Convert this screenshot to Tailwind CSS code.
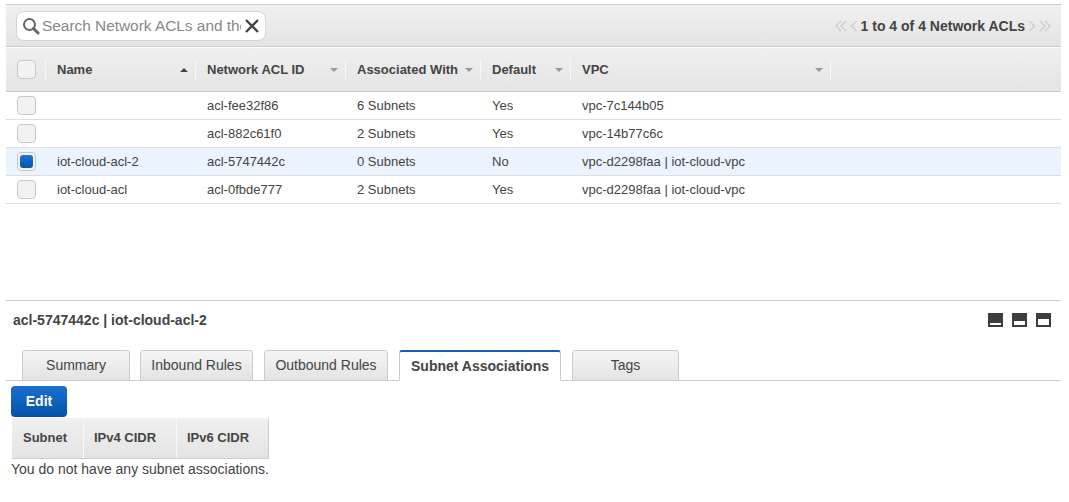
<!DOCTYPE html>
<html lang="en">
<head>
    <meta charset="UTF-8">
    <title>Network ACLs</title>
    <script src="https://cdn.jsdelivr.net/npm/@tailwindcss/browser@4"></script>
</head>
<body class="bg-white font-['Liberation_Sans',Arial,sans-serif] text-[#444] h-[502px] overflow-hidden">
    <div class="pt-1 pl-[6px] pr-2">
        <!-- Toolbar -->
        <div class="h-[43px] pt-px border-t border-b border-[#ccc] bg-linear-to-b from-[#f0f0f0] to-[#e4e4e4] flex items-center justify-between pl-[10px] pr-[10px]">
            <div class="w-[250px] h-[30px] bg-white border border-[#d5d5d5] rounded-lg flex items-center pl-[5px]">
                <svg width="18" height="18" viewBox="0 0 18 18" fill="none" class="shrink-0">
                    <circle cx="7.5" cy="7.5" r="5.5" stroke="#666" stroke-width="2"/>
                    <path d="M11.5 11.5 L16 16" stroke="#666" stroke-width="3" stroke-linecap="round"/>
                </svg>
                <div class="w-[199px] overflow-hidden whitespace-nowrap text-[15.4px] text-[#888] ml-[2px]">Search Network ACLs and their properties</div>
                <svg width="16" height="16" viewBox="0 0 16 16" fill="none" class="shrink-0 ml-[3px]">
                    <path d="M2 2 L14 14 M14 2 L2 14" stroke="#444" stroke-width="2.4"/>
                </svg>
            </div>
            <div class="flex items-center gap-[3px]">
                <svg width="12" height="12" viewBox="0 0 12 12" fill="none" stroke="#ccc" stroke-width="1.3"><path d="M6 1 L1 6 L6 11 M11 1 L6 6 L11 11"/></svg>
                <svg width="8" height="12" viewBox="0 0 8 12" fill="none" stroke="#ccc" stroke-width="1.3"><path d="M6.5 1 L1.5 6 L6.5 11"/></svg>
                <span class="text-[14px] font-bold">1 to 4 of 4 Network ACLs</span>
                <svg width="8" height="12" viewBox="0 0 8 12" fill="none" stroke="#ccc" stroke-width="1.3"><path d="M1.5 1 L6.5 6 L1.5 11"/></svg>
                <svg width="12" height="12" viewBox="0 0 12 12" fill="none" stroke="#ccc" stroke-width="1.3"><path d="M1 1 L6 6 L1 11 M6 1 L11 6 L6 11"/></svg>
            </div>
        </div>

        <!-- Table header -->
        <div class="h-[44px] mt-px border-b border-[#ccc] bg-linear-to-b from-[#f0f0f0] to-[#e4e4e4] flex items-center text-[13px] font-bold">
            <div class="w-[40px] h-[20px] pl-[11px] flex items-center border-r border-[#f8f8f8] shrink-0">
                <span class="w-[19px] h-[19px] bg-[#f2f2f2] border border-[#c8c8c8] rounded-[4px]"></span>
            </div>
            <div class="w-[150px] h-[20px] pl-[11px] pr-[7px] flex items-center justify-between border-r border-[#f8f8f8] shrink-0">Name<span class="w-0 h-0 border-x-[4px] border-x-transparent border-b-[4px] border-b-[#444]"></span></div>
            <div class="w-[150px] h-[20px] pl-[11px] pr-[7px] flex items-center justify-between border-r border-[#f8f8f8] shrink-0">Network ACL ID<span class="w-0 h-0 border-x-[4px] border-x-transparent border-t-[4px] border-t-[#999]"></span></div>
            <div class="w-[135px] h-[20px] pl-[11px] pr-[7px] flex items-center justify-between border-r border-[#f8f8f8] shrink-0">Associated With<span class="w-0 h-0 border-x-[4px] border-x-transparent border-t-[4px] border-t-[#999]"></span></div>
            <div class="w-[90px] h-[20px] pl-[11px] pr-[7px] flex items-center justify-between border-r border-[#f8f8f8] shrink-0">Default<span class="w-0 h-0 border-x-[4px] border-x-transparent border-t-[4px] border-t-[#999]"></span></div>
            <div class="w-[260px] h-[20px] pl-[11px] pr-[7px] flex items-center justify-between border-r border-[#f8f8f8] shrink-0">VPC<span class="w-0 h-0 border-x-[4px] border-x-transparent border-t-[4px] border-t-[#999]"></span></div>
        </div>

        <!-- Rows -->
        <div class="text-[13px]">
            <div class="h-[28px] border-b border-[#ddd] flex items-center">
                <div class="w-[40px] pl-[11px] flex shrink-0"><span class="w-[19px] h-[19px] bg-[#f2f2f2] border border-[#c8c8c8] rounded-[4px]"></span></div>
                <div class="w-[150px] pl-[11px] shrink-0"></div>
                <div class="w-[150px] pl-[11px] shrink-0">acl-fee32f86</div>
                <div class="w-[135px] pl-[11px] shrink-0">6 Subnets</div>
                <div class="w-[90px] pl-[11px] shrink-0">Yes</div>
                <div class="pl-[11px]">vpc-7c144b05</div>
            </div>
            <div class="h-[28px] border-b border-[#ddd] flex items-center">
                <div class="w-[40px] pl-[11px] flex shrink-0"><span class="w-[19px] h-[19px] bg-[#f2f2f2] border border-[#c8c8c8] rounded-[4px]"></span></div>
                <div class="w-[150px] pl-[11px] shrink-0"></div>
                <div class="w-[150px] pl-[11px] shrink-0">acl-882c61f0</div>
                <div class="w-[135px] pl-[11px] shrink-0">2 Subnets</div>
                <div class="w-[90px] pl-[11px] shrink-0">Yes</div>
                <div class="pl-[11px]">vpc-14b77c6c</div>
            </div>
            <div class="h-[28px] border-b border-[#ddd] bg-[#eaf3fe] flex items-center">
                <div class="w-[40px] pl-[11px] flex shrink-0"><span class="w-[19px] h-[19px] bg-[#f2f2f2] border border-[#c8c8c8] rounded-[4px] p-[2px]"><span class="block w-[13px] h-[13px] rounded-[3px] bg-linear-to-b from-[#1a73d0] to-[#0a55ad]"></span></span></div>
                <div class="w-[150px] pl-[11px] shrink-0">iot-cloud-acl-2</div>
                <div class="w-[150px] pl-[11px] shrink-0">acl-5747442c</div>
                <div class="w-[135px] pl-[11px] shrink-0">0 Subnets</div>
                <div class="w-[90px] pl-[11px] shrink-0">No</div>
                <div class="pl-[11px]">vpc-d2298faa | iot-cloud-vpc</div>
            </div>
            <div class="h-[28px] border-b border-[#ddd] flex items-center">
                <div class="w-[40px] pl-[11px] flex shrink-0"><span class="w-[19px] h-[19px] bg-[#f2f2f2] border border-[#c8c8c8] rounded-[4px]"></span></div>
                <div class="w-[150px] pl-[11px] shrink-0">iot-cloud-acl</div>
                <div class="w-[150px] pl-[11px] shrink-0">acl-0fbde777</div>
                <div class="w-[135px] pl-[11px] shrink-0">2 Subnets</div>
                <div class="w-[90px] pl-[11px] shrink-0">Yes</div>
                <div class="pl-[11px]">vpc-d2298faa | iot-cloud-vpc</div>
            </div>
        </div>

        <!-- Detail pane -->
        <div class="mt-[96px] border-t border-[#ccc]">
            <div class="h-[40px] pl-[7px] pr-[10px] pb-[2px] flex items-center justify-between">
                <span class="text-[14px] font-bold">acl-5747442c | iot-cloud-acl-2</span>
                <div class="flex gap-[9px]">
                    <span class="w-[15px] h-[14px] bg-[#3d3d3d] flex items-end justify-center pb-[2px]"><span class="w-[11px] h-[2px] bg-white"></span></span>
                    <span class="w-[15px] h-[14px] bg-[#3d3d3d] flex items-end justify-center pb-[2px]"><span class="w-[11px] h-[4px] bg-white"></span></span>
                    <span class="w-[15px] h-[14px] bg-[#3d3d3d] flex items-end justify-center pb-[2px]"><span class="w-[11px] h-[6px] bg-white"></span></span>
                </div>
            </div>
            <!-- Tabs -->
            <div class="h-[40px] border-b border-[#ccc] flex items-end pl-[16px] text-[14px]">
                <div class="w-[108px] h-[31px] -mb-px border border-[#ccc] rounded-t-[3px] bg-linear-to-b from-[#f5f5f5] to-[#e3e3e3] flex items-center justify-center">Summary</div>
                <div class="w-[113px] h-[31px] -mb-px ml-[10px] border border-[#ccc] rounded-t-[3px] bg-linear-to-b from-[#f5f5f5] to-[#e3e3e3] flex items-center justify-center">Inbound Rules</div>
                <div class="w-[124px] h-[31px] -mb-px ml-[11px] border border-[#ccc] rounded-t-[3px] bg-linear-to-b from-[#f5f5f5] to-[#e3e3e3] flex items-center justify-center">Outbound Rules</div>
                <div class="w-[162px] h-[31px] -mb-px ml-[11px] border border-[#ccc] border-t-2 border-t-[#0f62b8] border-b-white rounded-t-[3px] bg-white flex items-center justify-center font-bold">Subnet Associations</div>
                <div class="w-[107px] h-[31px] -mb-px ml-[11px] border border-[#ccc] rounded-t-[3px] bg-linear-to-b from-[#f5f5f5] to-[#e3e3e3] flex items-center justify-center">Tags</div>
            </div>
            <div class="pl-[5px] pt-[5px]">
                <button class="block w-[56px] h-[31px] rounded-[4px] bg-linear-to-b from-[#1a70cf] to-[#0352a8] text-white text-[14px] font-bold">Edit</button>
                <div class="mt-px ml-px w-[257px] h-[41px] border-b border-[#ccc] bg-linear-to-b from-[#f0f0f0] to-[#e4e4e4] flex text-[13px] font-bold">
                    <div class="w-[72px] pl-[11px] border-r border-[#f8f8f8] flex items-center">Subnet</div>
                    <div class="w-[93px] pl-[10px] border-r border-[#f8f8f8] flex items-center">IPv4 CIDR</div>
                    <div class="w-[92px] pl-[10px] border-r border-[#ccc] flex items-center">IPv6 CIDR</div>
                </div>
                <p class="text-[14px] leading-[20px]">You do not have any subnet associations.</p>
            </div>
        </div>
    </div>
</body>
</html>
